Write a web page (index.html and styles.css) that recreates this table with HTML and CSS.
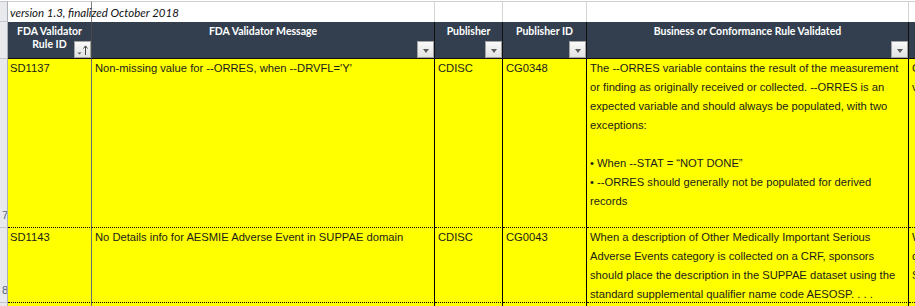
FILE: index.html
```html
<!DOCTYPE html>
<html>
<head>
<meta charset="utf-8">
<link rel="stylesheet" href="styles.css">
</head>
<body>
<div class="sheet">
  <!-- row 1 -->
  <div class="rh r1"></div>
  <div class="c r1 ca ver"><span>version 1.3, finalized October 2018</span></div>
  <div class="c r1"></div>
  <div class="c r1"></div>
  <div class="c r1"></div>
  <div class="c r1"></div>
  <div class="c r1 cf"></div>

  <!-- header -->
  <div class="rh"></div>
  <div class="th ca">FDA Validator<br>Rule ID<span class="fb sort"><svg width="15" height="15" viewBox="0 0 15 15"><path d="M2.5 10.5h4l-2 2z" fill="#555"/><path d="M10.5 13V4" stroke="#444" stroke-width="1" fill="none"/><path d="M8.5 6.5l2-2.6 2 2.6" stroke="#444" stroke-width="1" fill="none"/></svg></span></div>
  <div class="th">FDA Validator Message<span class="fb"><i class="tri"></i></span></div>
  <div class="th">Publisher<span class="fb"><i class="tri"></i></span></div>
  <div class="th">Publisher ID<span class="fb"><i class="tri"></i></span></div>
  <div class="th">Business or Conformance Rule Validated<span class="fb"><i class="tri"></i></span></div>
  <div class="th cf"></div>

  <!-- row 3 -->
  <div class="rh num"><span>7</span></div>
  <div class="td ca">SD1137</div>
  <div class="td">Non-missing value for --ORRES, when --DRVFL='Y'</div>
  <div class="td">CDISC</div>
  <div class="td">CG0348</div>
  <div class="td">The --ORRES variable contains the result of the measurement or finding as originally received or collected. --ORRES is an expected variable and should always be populated, with two exceptions:<br><br>• When --STAT = “NOT DONE”<br>• --ORRES should generally not be populated for derived records</div>
  <div class="td cf">Conditions<br>values</div>

  <!-- row 4 -->
  <div class="rh num"><span>8</span></div>
  <div class="td ca">SD1143</div>
  <div class="td">No Details info for AESMIE Adverse Event in SUPPAE domain</div>
  <div class="td">CDISC</div>
  <div class="td">CG0043</div>
  <div class="td">When a description of Other Medically Important Serious Adverse Events category is collected on a CRF, sponsors should place the description in the SUPPAE dataset using the standard supplemental qualifier name code AESOSP. . . .</div>
  <div class="td cf">When<br>described<br>SUPPAE</div>

  <!-- row 5 -->
  <div class="rh"></div>
  <div class="td ca"></div>
  <div class="td"></div>
  <div class="td"></div>
  <div class="td"></div>
  <div class="td"></div>
  <div class="td cf"></div>
</div>
</body>
</html>
```

FILE: styles.css
```css
* { box-sizing: border-box; }
html, body { margin: 0; padding: 0; background: #fff; }
body { width: 915px; height: 306px; overflow: hidden; }

.sheet {
  display: grid;
  grid-template-columns: 8px 84px 343px 68px 84px 322px 1fr;
  grid-template-rows: 21px 37px 169px 75px 20px;
  margin-top: 1px;
  font-family: "Liberation Sans", Arial, sans-serif;
  color: #1b1b1b;
}

.rh {
  background: #e7e9ec;
  border-right: 1px solid #a9b0b8;
  border-bottom: 1px solid #c3c7cd;
  overflow: hidden;
}
.rh.r1 { border-top: 1px solid #c3c7cd; }
.num {
  display: flex;
  align-items: flex-end;
  justify-content: flex-end;
  font-size: 11px;
  line-height: 13px;
  padding-bottom: 5px;
  color: #4f6585;
}
.num span { margin-right: -1px; }

.c {
  border-top: 1px solid #cfcfcf;
  border-right: 1px solid #d4d4d4;
}
.c.ca { border-right-color: #7d7d7d; }
.ver {
  font-family: Lato, "Liberation Sans", sans-serif;
  font-style: italic;
  font-size: 11.5px;
  line-height: 18px;
  padding-top: 2px;
  padding-left: 2px;
  white-space: nowrap;
  overflow: visible;
  color: #111;
}

.th {
  position: relative;
  background: #333f4f;
  color: #fff;
  font-family: Lato, "Liberation Sans", sans-serif;
  font-weight: bold;
  font-size: 10.5px;
  line-height: 13px;
  padding-top: 3px;
  text-align: center;
  border-right: 1px solid #111;
  border-bottom: 1px solid #111;
}
.th.ca { border-right-color: #4a4a4a; }

.fb {
  position: absolute;
  right: 0;
  bottom: 0;
  width: 17px;
  height: 17px;
  border: 1px solid #a3a3a3;
  background: linear-gradient(#fafafa, #e2e2e2);
  display: flex;
  align-items: center;
  justify-content: center;
}
.tri {
  display: block;
  width: 0;
  height: 0;
  margin-top: 2px;
  border-left: 3.5px solid transparent;
  border-right: 3.5px solid transparent;
  border-top: 4px solid #5c5c5c;
}
.fb.sort svg { display: block; }

.td {
  background: #ffff00;
  font-size: 11.2px;
  line-height: 19px;
  padding: 0 3px;
  border-right: 1px solid #000;
  border-bottom: 1px dotted #000;
  overflow: hidden;
}
.td.ca {
  padding-left: 2px;
  border-right-color: #6f6f6f;
}
.cf {
  border-right: none;
  white-space: nowrap;
}
```
